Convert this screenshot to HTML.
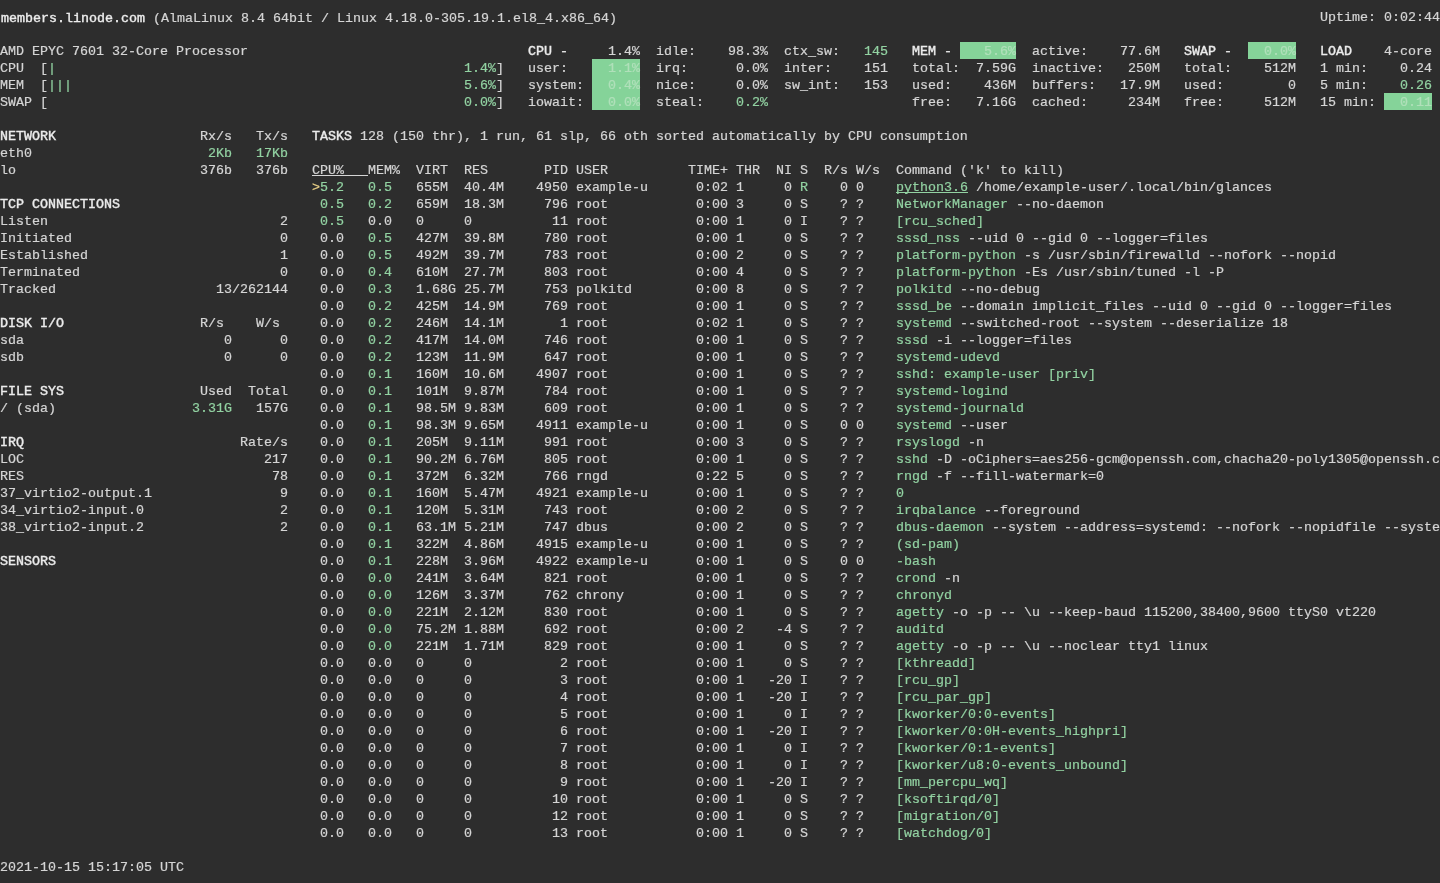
<!DOCTYPE html><html><head><meta charset="utf-8"><style>
html,body{margin:0;padding:0;}
body{width:1440px;height:883px;background:#2d2d2d;overflow:hidden;position:relative;font-family:"Liberation Mono",monospace;font-size:13.33px;}
.s{position:absolute;white-space:pre;height:17px;line-height:17px;color:#d5d5d5;}
.w{color:#d5d5d5;}
.b{color:#ececec;font-weight:normal;-webkit-text-stroke:0.4px;}
.t0{transform:translate(1px,1px);}
.g{color:#92d2a2;}
.gu{color:#92d2a2;text-decoration:underline;text-underline-offset:1px;text-decoration-skip-ink:none;}
.u{color:#d5d5d5;text-decoration:underline;text-underline-offset:1px;text-decoration-skip-ink:none;}
.y{color:#e8cf86;}
#L{position:absolute;left:0;top:0;width:1440px;height:883px;will-change:transform;-webkit-text-stroke:0.2px;}
.hl{position:absolute;background:#85d399;}
.ht{color:#b0e0ba;}

</style></head><body><div id="L">
<div class="hl" style="left:592px;top:59px;width:48px;height:51px"></div>
<div class="s ht" style="left:592px;top:60px">  1.1%</div>
<div class="s ht" style="left:592px;top:77px">  0.4%</div>
<div class="s ht" style="left:592px;top:94px">  0.0%</div>
<div class="hl" style="left:960px;top:42px;width:56px;height:17px"></div>
<div class="s ht" style="left:960px;top:43px">   5.6%</div>
<div class="hl" style="left:1248px;top:42px;width:48px;height:17px"></div>
<div class="s ht" style="left:1248px;top:43px">  0.0%</div>
<div class="hl" style="left:1384px;top:93px;width:48px;height:17px"></div>
<div class="s ht" style="left:1384px;top:94px">  0.11</div>
<div class="s b t0" style="left:0px;top:9px">members.linode.com</div>
<div class="s w t0" style="left:144px;top:9px"> (AlmaLinux 8.4 64bit / Linux 4.18.0-305.19.1.el8_4.x86_64)</div>
<div class="s w" style="left:1320px;top:9px">Uptime: 0:02:44</div>
<div class="s w" style="left:0px;top:43px">AMD EPYC 7601 32-Core Processor</div>
<div class="s b" style="left:528px;top:43px">CPU -</div>
<div class="s w" style="left:608px;top:43px">1.4%</div>
<div class="s w" style="left:656px;top:43px">idle:</div>
<div class="s w" style="left:728px;top:43px">98.3%</div>
<div class="s w" style="left:784px;top:43px">ctx_sw:</div>
<div class="s g" style="left:864px;top:43px">145</div>
<div class="s b" style="left:912px;top:43px">MEM -</div>
<div class="s w" style="left:1032px;top:43px">active:</div>
<div class="s w" style="left:1120px;top:43px">77.6M</div>
<div class="s b" style="left:1184px;top:43px">SWAP -</div>
<div class="s b" style="left:1320px;top:43px">LOAD</div>
<div class="s w" style="left:1384px;top:43px">4-core</div>
<div class="s w" style="left:0px;top:60px">CPU  [</div>
<div class="s g" style="left:48px;top:60px">|</div>
<div class="s g" style="left:464px;top:60px">1.4%</div>
<div class="s w" style="left:496px;top:60px">]</div>
<div class="s w" style="left:528px;top:60px">user:</div>
<div class="s w" style="left:656px;top:60px">irq:</div>
<div class="s w" style="left:736px;top:60px">0.0%</div>
<div class="s w" style="left:784px;top:60px">inter:</div>
<div class="s w" style="left:864px;top:60px">151</div>
<div class="s w" style="left:912px;top:60px">total:</div>
<div class="s w" style="left:976px;top:60px">7.59G</div>
<div class="s w" style="left:1032px;top:60px">inactive:</div>
<div class="s w" style="left:1128px;top:60px">250M</div>
<div class="s w" style="left:1184px;top:60px">total:</div>
<div class="s w" style="left:1264px;top:60px">512M</div>
<div class="s w" style="left:1320px;top:60px">1 min:</div>
<div class="s w" style="left:1400px;top:60px">0.24</div>
<div class="s w" style="left:0px;top:77px">MEM  [</div>
<div class="s g" style="left:48px;top:77px">|||</div>
<div class="s g" style="left:464px;top:77px">5.6%</div>
<div class="s w" style="left:496px;top:77px">]</div>
<div class="s w" style="left:528px;top:77px">system:</div>
<div class="s w" style="left:656px;top:77px">nice:</div>
<div class="s w" style="left:736px;top:77px">0.0%</div>
<div class="s w" style="left:784px;top:77px">sw_int:</div>
<div class="s w" style="left:864px;top:77px">153</div>
<div class="s w" style="left:912px;top:77px">used:</div>
<div class="s w" style="left:984px;top:77px">436M</div>
<div class="s w" style="left:1032px;top:77px">buffers:</div>
<div class="s w" style="left:1120px;top:77px">17.9M</div>
<div class="s w" style="left:1184px;top:77px">used:</div>
<div class="s w" style="left:1288px;top:77px">0</div>
<div class="s w" style="left:1320px;top:77px">5 min:</div>
<div class="s g" style="left:1400px;top:77px">0.26</div>
<div class="s w" style="left:0px;top:94px">SWAP [</div>
<div class="s g" style="left:464px;top:94px">0.0%</div>
<div class="s w" style="left:496px;top:94px">]</div>
<div class="s w" style="left:528px;top:94px">iowait:</div>
<div class="s w" style="left:656px;top:94px">steal:</div>
<div class="s g" style="left:736px;top:94px">0.2%</div>
<div class="s w" style="left:912px;top:94px">free:</div>
<div class="s w" style="left:976px;top:94px">7.16G</div>
<div class="s w" style="left:1032px;top:94px">cached:</div>
<div class="s w" style="left:1128px;top:94px">234M</div>
<div class="s w" style="left:1184px;top:94px">free:</div>
<div class="s w" style="left:1264px;top:94px">512M</div>
<div class="s w" style="left:1320px;top:94px">15 min:</div>
<div class="s b" style="left:0px;top:128px">NETWORK</div>
<div class="s w" style="left:200px;top:128px">Rx/s</div>
<div class="s w" style="left:256px;top:128px">Tx/s</div>
<div class="s w" style="left:0px;top:145px">eth0</div>
<div class="s g" style="left:208px;top:145px">2Kb</div>
<div class="s g" style="left:256px;top:145px">17Kb</div>
<div class="s w" style="left:0px;top:162px">lo</div>
<div class="s w" style="left:200px;top:162px">376b</div>
<div class="s w" style="left:256px;top:162px">376b</div>
<div class="s b" style="left:0px;top:196px">TCP CONNECTIONS</div>
<div class="s w" style="left:0px;top:213px">Listen</div>
<div class="s w" style="left:280px;top:213px">2</div>
<div class="s w" style="left:0px;top:230px">Initiated</div>
<div class="s w" style="left:280px;top:230px">0</div>
<div class="s w" style="left:0px;top:247px">Established</div>
<div class="s w" style="left:280px;top:247px">1</div>
<div class="s w" style="left:0px;top:264px">Terminated</div>
<div class="s w" style="left:280px;top:264px">0</div>
<div class="s w" style="left:0px;top:281px">Tracked</div>
<div class="s w" style="left:216px;top:281px">13/262144</div>
<div class="s b" style="left:0px;top:315px">DISK I/O</div>
<div class="s w" style="left:200px;top:315px">R/s</div>
<div class="s w" style="left:256px;top:315px">W/s</div>
<div class="s w" style="left:0px;top:332px">sda</div>
<div class="s w" style="left:224px;top:332px">0</div>
<div class="s w" style="left:280px;top:332px">0</div>
<div class="s w" style="left:0px;top:349px">sdb</div>
<div class="s w" style="left:224px;top:349px">0</div>
<div class="s w" style="left:280px;top:349px">0</div>
<div class="s b" style="left:0px;top:383px">FILE SYS</div>
<div class="s w" style="left:200px;top:383px">Used</div>
<div class="s w" style="left:248px;top:383px">Total</div>
<div class="s w" style="left:0px;top:400px">/ (sda)</div>
<div class="s g" style="left:192px;top:400px">3.31G</div>
<div class="s w" style="left:256px;top:400px">157G</div>
<div class="s b" style="left:0px;top:434px">IRQ</div>
<div class="s w" style="left:240px;top:434px">Rate/s</div>
<div class="s w" style="left:0px;top:451px">LOC</div>
<div class="s w" style="left:264px;top:451px">217</div>
<div class="s w" style="left:0px;top:468px">RES</div>
<div class="s w" style="left:272px;top:468px">78</div>
<div class="s w" style="left:0px;top:485px">37_virtio2-output.1</div>
<div class="s w" style="left:280px;top:485px">9</div>
<div class="s w" style="left:0px;top:502px">34_virtio2-input.0</div>
<div class="s w" style="left:280px;top:502px">2</div>
<div class="s w" style="left:0px;top:519px">38_virtio2-input.2</div>
<div class="s w" style="left:280px;top:519px">2</div>
<div class="s b" style="left:0px;top:553px">SENSORS</div>
<div class="s b" style="left:312px;top:128px">TASKS</div>
<div class="s w" style="left:352px;top:128px"> 128 (150 thr), 1 run, 61 slp, 66 oth sorted automatically by CPU consumption</div>
<div class="s u" style="left:312px;top:162px">CPU%   </div>
<div class="s w" style="left:368px;top:162px">MEM%</div>
<div class="s w" style="left:416px;top:162px">VIRT</div>
<div class="s w" style="left:464px;top:162px">RES</div>
<div class="s w" style="left:544px;top:162px">PID</div>
<div class="s w" style="left:576px;top:162px">USER</div>
<div class="s w" style="left:688px;top:162px">TIME+</div>
<div class="s w" style="left:736px;top:162px">THR</div>
<div class="s w" style="left:776px;top:162px">NI</div>
<div class="s w" style="left:800px;top:162px">S</div>
<div class="s w" style="left:824px;top:162px">R/s</div>
<div class="s w" style="left:856px;top:162px">W/s</div>
<div class="s w" style="left:896px;top:162px">Command (&#x27;k&#x27; to kill)</div>
<div class="s y" style="left:312px;top:179px">&gt;</div>
<div class="s g" style="left:320px;top:179px">5.2</div>
<div class="s g" style="left:368px;top:179px">0.5</div>
<div class="s w" style="left:416px;top:179px">655M</div>
<div class="s w" style="left:464px;top:179px">40.4M</div>
<div class="s w" style="left:536px;top:179px">4950</div>
<div class="s w" style="left:576px;top:179px">example-u</div>
<div class="s w" style="left:696px;top:179px">0:02</div>
<div class="s w" style="left:736px;top:179px">1</div>
<div class="s w" style="left:784px;top:179px">0</div>
<div class="s g" style="left:800px;top:179px">R</div>
<div class="s w" style="left:840px;top:179px">0</div>
<div class="s w" style="left:856px;top:179px">0</div>
<div class="s gu" style="left:896px;top:179px">python3.6</div>
<div class="s w" style="left:968px;top:179px"> /home/example-user/.local/bin/glances</div>
<div class="s g" style="left:320px;top:196px">0.5</div>
<div class="s g" style="left:368px;top:196px">0.2</div>
<div class="s w" style="left:416px;top:196px">659M</div>
<div class="s w" style="left:464px;top:196px">18.3M</div>
<div class="s w" style="left:544px;top:196px">796</div>
<div class="s w" style="left:576px;top:196px">root</div>
<div class="s w" style="left:696px;top:196px">0:00</div>
<div class="s w" style="left:736px;top:196px">3</div>
<div class="s w" style="left:784px;top:196px">0</div>
<div class="s w" style="left:800px;top:196px">S</div>
<div class="s w" style="left:840px;top:196px">?</div>
<div class="s w" style="left:856px;top:196px">?</div>
<div class="s g" style="left:896px;top:196px">NetworkManager</div>
<div class="s w" style="left:1008px;top:196px"> --no-daemon</div>
<div class="s g" style="left:320px;top:213px">0.5</div>
<div class="s w" style="left:368px;top:213px">0.0</div>
<div class="s w" style="left:416px;top:213px">0</div>
<div class="s w" style="left:464px;top:213px">0</div>
<div class="s w" style="left:552px;top:213px">11</div>
<div class="s w" style="left:576px;top:213px">root</div>
<div class="s w" style="left:696px;top:213px">0:00</div>
<div class="s w" style="left:736px;top:213px">1</div>
<div class="s w" style="left:784px;top:213px">0</div>
<div class="s w" style="left:800px;top:213px">I</div>
<div class="s w" style="left:840px;top:213px">?</div>
<div class="s w" style="left:856px;top:213px">?</div>
<div class="s g" style="left:896px;top:213px">[rcu_sched]</div>
<div class="s w" style="left:320px;top:230px">0.0</div>
<div class="s g" style="left:368px;top:230px">0.5</div>
<div class="s w" style="left:416px;top:230px">427M</div>
<div class="s w" style="left:464px;top:230px">39.8M</div>
<div class="s w" style="left:544px;top:230px">780</div>
<div class="s w" style="left:576px;top:230px">root</div>
<div class="s w" style="left:696px;top:230px">0:00</div>
<div class="s w" style="left:736px;top:230px">1</div>
<div class="s w" style="left:784px;top:230px">0</div>
<div class="s w" style="left:800px;top:230px">S</div>
<div class="s w" style="left:840px;top:230px">?</div>
<div class="s w" style="left:856px;top:230px">?</div>
<div class="s g" style="left:896px;top:230px">sssd_nss</div>
<div class="s w" style="left:960px;top:230px"> --uid 0 --gid 0 --logger=files</div>
<div class="s w" style="left:320px;top:247px">0.0</div>
<div class="s g" style="left:368px;top:247px">0.5</div>
<div class="s w" style="left:416px;top:247px">492M</div>
<div class="s w" style="left:464px;top:247px">39.7M</div>
<div class="s w" style="left:544px;top:247px">783</div>
<div class="s w" style="left:576px;top:247px">root</div>
<div class="s w" style="left:696px;top:247px">0:00</div>
<div class="s w" style="left:736px;top:247px">2</div>
<div class="s w" style="left:784px;top:247px">0</div>
<div class="s w" style="left:800px;top:247px">S</div>
<div class="s w" style="left:840px;top:247px">?</div>
<div class="s w" style="left:856px;top:247px">?</div>
<div class="s g" style="left:896px;top:247px">platform-python</div>
<div class="s w" style="left:1016px;top:247px"> -s /usr/sbin/firewalld --nofork --nopid</div>
<div class="s w" style="left:320px;top:264px">0.0</div>
<div class="s g" style="left:368px;top:264px">0.4</div>
<div class="s w" style="left:416px;top:264px">610M</div>
<div class="s w" style="left:464px;top:264px">27.7M</div>
<div class="s w" style="left:544px;top:264px">803</div>
<div class="s w" style="left:576px;top:264px">root</div>
<div class="s w" style="left:696px;top:264px">0:00</div>
<div class="s w" style="left:736px;top:264px">4</div>
<div class="s w" style="left:784px;top:264px">0</div>
<div class="s w" style="left:800px;top:264px">S</div>
<div class="s w" style="left:840px;top:264px">?</div>
<div class="s w" style="left:856px;top:264px">?</div>
<div class="s g" style="left:896px;top:264px">platform-python</div>
<div class="s w" style="left:1016px;top:264px"> -Es /usr/sbin/tuned -l -P</div>
<div class="s w" style="left:320px;top:281px">0.0</div>
<div class="s g" style="left:368px;top:281px">0.3</div>
<div class="s w" style="left:416px;top:281px">1.68G</div>
<div class="s w" style="left:464px;top:281px">25.7M</div>
<div class="s w" style="left:544px;top:281px">753</div>
<div class="s w" style="left:576px;top:281px">polkitd</div>
<div class="s w" style="left:696px;top:281px">0:00</div>
<div class="s w" style="left:736px;top:281px">8</div>
<div class="s w" style="left:784px;top:281px">0</div>
<div class="s w" style="left:800px;top:281px">S</div>
<div class="s w" style="left:840px;top:281px">?</div>
<div class="s w" style="left:856px;top:281px">?</div>
<div class="s g" style="left:896px;top:281px">polkitd</div>
<div class="s w" style="left:952px;top:281px"> --no-debug</div>
<div class="s w" style="left:320px;top:298px">0.0</div>
<div class="s g" style="left:368px;top:298px">0.2</div>
<div class="s w" style="left:416px;top:298px">425M</div>
<div class="s w" style="left:464px;top:298px">14.9M</div>
<div class="s w" style="left:544px;top:298px">769</div>
<div class="s w" style="left:576px;top:298px">root</div>
<div class="s w" style="left:696px;top:298px">0:00</div>
<div class="s w" style="left:736px;top:298px">1</div>
<div class="s w" style="left:784px;top:298px">0</div>
<div class="s w" style="left:800px;top:298px">S</div>
<div class="s w" style="left:840px;top:298px">?</div>
<div class="s w" style="left:856px;top:298px">?</div>
<div class="s g" style="left:896px;top:298px">sssd_be</div>
<div class="s w" style="left:952px;top:298px"> --domain implicit_files --uid 0 --gid 0 --logger=files</div>
<div class="s w" style="left:320px;top:315px">0.0</div>
<div class="s g" style="left:368px;top:315px">0.2</div>
<div class="s w" style="left:416px;top:315px">246M</div>
<div class="s w" style="left:464px;top:315px">14.1M</div>
<div class="s w" style="left:560px;top:315px">1</div>
<div class="s w" style="left:576px;top:315px">root</div>
<div class="s w" style="left:696px;top:315px">0:02</div>
<div class="s w" style="left:736px;top:315px">1</div>
<div class="s w" style="left:784px;top:315px">0</div>
<div class="s w" style="left:800px;top:315px">S</div>
<div class="s w" style="left:840px;top:315px">?</div>
<div class="s w" style="left:856px;top:315px">?</div>
<div class="s g" style="left:896px;top:315px">systemd</div>
<div class="s w" style="left:952px;top:315px"> --switched-root --system --deserialize 18</div>
<div class="s w" style="left:320px;top:332px">0.0</div>
<div class="s g" style="left:368px;top:332px">0.2</div>
<div class="s w" style="left:416px;top:332px">417M</div>
<div class="s w" style="left:464px;top:332px">14.0M</div>
<div class="s w" style="left:544px;top:332px">746</div>
<div class="s w" style="left:576px;top:332px">root</div>
<div class="s w" style="left:696px;top:332px">0:00</div>
<div class="s w" style="left:736px;top:332px">1</div>
<div class="s w" style="left:784px;top:332px">0</div>
<div class="s w" style="left:800px;top:332px">S</div>
<div class="s w" style="left:840px;top:332px">?</div>
<div class="s w" style="left:856px;top:332px">?</div>
<div class="s g" style="left:896px;top:332px">sssd</div>
<div class="s w" style="left:928px;top:332px"> -i --logger=files</div>
<div class="s w" style="left:320px;top:349px">0.0</div>
<div class="s g" style="left:368px;top:349px">0.2</div>
<div class="s w" style="left:416px;top:349px">123M</div>
<div class="s w" style="left:464px;top:349px">11.9M</div>
<div class="s w" style="left:544px;top:349px">647</div>
<div class="s w" style="left:576px;top:349px">root</div>
<div class="s w" style="left:696px;top:349px">0:00</div>
<div class="s w" style="left:736px;top:349px">1</div>
<div class="s w" style="left:784px;top:349px">0</div>
<div class="s w" style="left:800px;top:349px">S</div>
<div class="s w" style="left:840px;top:349px">?</div>
<div class="s w" style="left:856px;top:349px">?</div>
<div class="s g" style="left:896px;top:349px">systemd-udevd</div>
<div class="s w" style="left:320px;top:366px">0.0</div>
<div class="s g" style="left:368px;top:366px">0.1</div>
<div class="s w" style="left:416px;top:366px">160M</div>
<div class="s w" style="left:464px;top:366px">10.6M</div>
<div class="s w" style="left:536px;top:366px">4907</div>
<div class="s w" style="left:576px;top:366px">root</div>
<div class="s w" style="left:696px;top:366px">0:00</div>
<div class="s w" style="left:736px;top:366px">1</div>
<div class="s w" style="left:784px;top:366px">0</div>
<div class="s w" style="left:800px;top:366px">S</div>
<div class="s w" style="left:840px;top:366px">?</div>
<div class="s w" style="left:856px;top:366px">?</div>
<div class="s g" style="left:896px;top:366px">sshd: example-user [priv]</div>
<div class="s w" style="left:320px;top:383px">0.0</div>
<div class="s g" style="left:368px;top:383px">0.1</div>
<div class="s w" style="left:416px;top:383px">101M</div>
<div class="s w" style="left:464px;top:383px">9.87M</div>
<div class="s w" style="left:544px;top:383px">784</div>
<div class="s w" style="left:576px;top:383px">root</div>
<div class="s w" style="left:696px;top:383px">0:00</div>
<div class="s w" style="left:736px;top:383px">1</div>
<div class="s w" style="left:784px;top:383px">0</div>
<div class="s w" style="left:800px;top:383px">S</div>
<div class="s w" style="left:840px;top:383px">?</div>
<div class="s w" style="left:856px;top:383px">?</div>
<div class="s g" style="left:896px;top:383px">systemd-logind</div>
<div class="s w" style="left:320px;top:400px">0.0</div>
<div class="s g" style="left:368px;top:400px">0.1</div>
<div class="s w" style="left:416px;top:400px">98.5M</div>
<div class="s w" style="left:464px;top:400px">9.83M</div>
<div class="s w" style="left:544px;top:400px">609</div>
<div class="s w" style="left:576px;top:400px">root</div>
<div class="s w" style="left:696px;top:400px">0:00</div>
<div class="s w" style="left:736px;top:400px">1</div>
<div class="s w" style="left:784px;top:400px">0</div>
<div class="s w" style="left:800px;top:400px">S</div>
<div class="s w" style="left:840px;top:400px">?</div>
<div class="s w" style="left:856px;top:400px">?</div>
<div class="s g" style="left:896px;top:400px">systemd-journald</div>
<div class="s w" style="left:320px;top:417px">0.0</div>
<div class="s g" style="left:368px;top:417px">0.1</div>
<div class="s w" style="left:416px;top:417px">98.3M</div>
<div class="s w" style="left:464px;top:417px">9.65M</div>
<div class="s w" style="left:536px;top:417px">4911</div>
<div class="s w" style="left:576px;top:417px">example-u</div>
<div class="s w" style="left:696px;top:417px">0:00</div>
<div class="s w" style="left:736px;top:417px">1</div>
<div class="s w" style="left:784px;top:417px">0</div>
<div class="s w" style="left:800px;top:417px">S</div>
<div class="s w" style="left:840px;top:417px">0</div>
<div class="s w" style="left:856px;top:417px">0</div>
<div class="s g" style="left:896px;top:417px">systemd</div>
<div class="s w" style="left:952px;top:417px"> --user</div>
<div class="s w" style="left:320px;top:434px">0.0</div>
<div class="s g" style="left:368px;top:434px">0.1</div>
<div class="s w" style="left:416px;top:434px">205M</div>
<div class="s w" style="left:464px;top:434px">9.11M</div>
<div class="s w" style="left:544px;top:434px">991</div>
<div class="s w" style="left:576px;top:434px">root</div>
<div class="s w" style="left:696px;top:434px">0:00</div>
<div class="s w" style="left:736px;top:434px">3</div>
<div class="s w" style="left:784px;top:434px">0</div>
<div class="s w" style="left:800px;top:434px">S</div>
<div class="s w" style="left:840px;top:434px">?</div>
<div class="s w" style="left:856px;top:434px">?</div>
<div class="s g" style="left:896px;top:434px">rsyslogd</div>
<div class="s w" style="left:960px;top:434px"> -n</div>
<div class="s w" style="left:320px;top:451px">0.0</div>
<div class="s g" style="left:368px;top:451px">0.1</div>
<div class="s w" style="left:416px;top:451px">90.2M</div>
<div class="s w" style="left:464px;top:451px">6.76M</div>
<div class="s w" style="left:544px;top:451px">805</div>
<div class="s w" style="left:576px;top:451px">root</div>
<div class="s w" style="left:696px;top:451px">0:00</div>
<div class="s w" style="left:736px;top:451px">1</div>
<div class="s w" style="left:784px;top:451px">0</div>
<div class="s w" style="left:800px;top:451px">S</div>
<div class="s w" style="left:840px;top:451px">?</div>
<div class="s w" style="left:856px;top:451px">?</div>
<div class="s g" style="left:896px;top:451px">sshd</div>
<div class="s w" style="left:928px;top:451px"> -D -oCiphers=aes256-gcm@openssh.com,chacha20-poly1305@openssh.c</div>
<div class="s w" style="left:320px;top:468px">0.0</div>
<div class="s g" style="left:368px;top:468px">0.1</div>
<div class="s w" style="left:416px;top:468px">372M</div>
<div class="s w" style="left:464px;top:468px">6.32M</div>
<div class="s w" style="left:544px;top:468px">766</div>
<div class="s w" style="left:576px;top:468px">rngd</div>
<div class="s w" style="left:696px;top:468px">0:22</div>
<div class="s w" style="left:736px;top:468px">5</div>
<div class="s w" style="left:784px;top:468px">0</div>
<div class="s w" style="left:800px;top:468px">S</div>
<div class="s w" style="left:840px;top:468px">?</div>
<div class="s w" style="left:856px;top:468px">?</div>
<div class="s g" style="left:896px;top:468px">rngd</div>
<div class="s w" style="left:928px;top:468px"> -f --fill-watermark=0</div>
<div class="s w" style="left:320px;top:485px">0.0</div>
<div class="s g" style="left:368px;top:485px">0.1</div>
<div class="s w" style="left:416px;top:485px">160M</div>
<div class="s w" style="left:464px;top:485px">5.47M</div>
<div class="s w" style="left:536px;top:485px">4921</div>
<div class="s w" style="left:576px;top:485px">example-u</div>
<div class="s w" style="left:696px;top:485px">0:00</div>
<div class="s w" style="left:736px;top:485px">1</div>
<div class="s w" style="left:784px;top:485px">0</div>
<div class="s w" style="left:800px;top:485px">S</div>
<div class="s w" style="left:840px;top:485px">?</div>
<div class="s w" style="left:856px;top:485px">?</div>
<div class="s g" style="left:896px;top:485px">0</div>
<div class="s w" style="left:320px;top:502px">0.0</div>
<div class="s g" style="left:368px;top:502px">0.1</div>
<div class="s w" style="left:416px;top:502px">120M</div>
<div class="s w" style="left:464px;top:502px">5.31M</div>
<div class="s w" style="left:544px;top:502px">743</div>
<div class="s w" style="left:576px;top:502px">root</div>
<div class="s w" style="left:696px;top:502px">0:00</div>
<div class="s w" style="left:736px;top:502px">2</div>
<div class="s w" style="left:784px;top:502px">0</div>
<div class="s w" style="left:800px;top:502px">S</div>
<div class="s w" style="left:840px;top:502px">?</div>
<div class="s w" style="left:856px;top:502px">?</div>
<div class="s g" style="left:896px;top:502px">irqbalance</div>
<div class="s w" style="left:976px;top:502px"> --foreground</div>
<div class="s w" style="left:320px;top:519px">0.0</div>
<div class="s g" style="left:368px;top:519px">0.1</div>
<div class="s w" style="left:416px;top:519px">63.1M</div>
<div class="s w" style="left:464px;top:519px">5.21M</div>
<div class="s w" style="left:544px;top:519px">747</div>
<div class="s w" style="left:576px;top:519px">dbus</div>
<div class="s w" style="left:696px;top:519px">0:00</div>
<div class="s w" style="left:736px;top:519px">2</div>
<div class="s w" style="left:784px;top:519px">0</div>
<div class="s w" style="left:800px;top:519px">S</div>
<div class="s w" style="left:840px;top:519px">?</div>
<div class="s w" style="left:856px;top:519px">?</div>
<div class="s g" style="left:896px;top:519px">dbus-daemon</div>
<div class="s w" style="left:984px;top:519px"> --system --address=systemd: --nofork --nopidfile --syste</div>
<div class="s w" style="left:320px;top:536px">0.0</div>
<div class="s g" style="left:368px;top:536px">0.1</div>
<div class="s w" style="left:416px;top:536px">322M</div>
<div class="s w" style="left:464px;top:536px">4.86M</div>
<div class="s w" style="left:536px;top:536px">4915</div>
<div class="s w" style="left:576px;top:536px">example-u</div>
<div class="s w" style="left:696px;top:536px">0:00</div>
<div class="s w" style="left:736px;top:536px">1</div>
<div class="s w" style="left:784px;top:536px">0</div>
<div class="s w" style="left:800px;top:536px">S</div>
<div class="s w" style="left:840px;top:536px">?</div>
<div class="s w" style="left:856px;top:536px">?</div>
<div class="s g" style="left:896px;top:536px">(sd-pam)</div>
<div class="s w" style="left:320px;top:553px">0.0</div>
<div class="s g" style="left:368px;top:553px">0.1</div>
<div class="s w" style="left:416px;top:553px">228M</div>
<div class="s w" style="left:464px;top:553px">3.96M</div>
<div class="s w" style="left:536px;top:553px">4922</div>
<div class="s w" style="left:576px;top:553px">example-u</div>
<div class="s w" style="left:696px;top:553px">0:00</div>
<div class="s w" style="left:736px;top:553px">1</div>
<div class="s w" style="left:784px;top:553px">0</div>
<div class="s w" style="left:800px;top:553px">S</div>
<div class="s w" style="left:840px;top:553px">0</div>
<div class="s w" style="left:856px;top:553px">0</div>
<div class="s g" style="left:896px;top:553px">-bash</div>
<div class="s w" style="left:320px;top:570px">0.0</div>
<div class="s g" style="left:368px;top:570px">0.0</div>
<div class="s w" style="left:416px;top:570px">241M</div>
<div class="s w" style="left:464px;top:570px">3.64M</div>
<div class="s w" style="left:544px;top:570px">821</div>
<div class="s w" style="left:576px;top:570px">root</div>
<div class="s w" style="left:696px;top:570px">0:00</div>
<div class="s w" style="left:736px;top:570px">1</div>
<div class="s w" style="left:784px;top:570px">0</div>
<div class="s w" style="left:800px;top:570px">S</div>
<div class="s w" style="left:840px;top:570px">?</div>
<div class="s w" style="left:856px;top:570px">?</div>
<div class="s g" style="left:896px;top:570px">crond</div>
<div class="s w" style="left:936px;top:570px"> -n</div>
<div class="s w" style="left:320px;top:587px">0.0</div>
<div class="s g" style="left:368px;top:587px">0.0</div>
<div class="s w" style="left:416px;top:587px">126M</div>
<div class="s w" style="left:464px;top:587px">3.37M</div>
<div class="s w" style="left:544px;top:587px">762</div>
<div class="s w" style="left:576px;top:587px">chrony</div>
<div class="s w" style="left:696px;top:587px">0:00</div>
<div class="s w" style="left:736px;top:587px">1</div>
<div class="s w" style="left:784px;top:587px">0</div>
<div class="s w" style="left:800px;top:587px">S</div>
<div class="s w" style="left:840px;top:587px">?</div>
<div class="s w" style="left:856px;top:587px">?</div>
<div class="s g" style="left:896px;top:587px">chronyd</div>
<div class="s w" style="left:320px;top:604px">0.0</div>
<div class="s g" style="left:368px;top:604px">0.0</div>
<div class="s w" style="left:416px;top:604px">221M</div>
<div class="s w" style="left:464px;top:604px">2.12M</div>
<div class="s w" style="left:544px;top:604px">830</div>
<div class="s w" style="left:576px;top:604px">root</div>
<div class="s w" style="left:696px;top:604px">0:00</div>
<div class="s w" style="left:736px;top:604px">1</div>
<div class="s w" style="left:784px;top:604px">0</div>
<div class="s w" style="left:800px;top:604px">S</div>
<div class="s w" style="left:840px;top:604px">?</div>
<div class="s w" style="left:856px;top:604px">?</div>
<div class="s g" style="left:896px;top:604px">agetty</div>
<div class="s w" style="left:944px;top:604px"> -o -p -- \u --keep-baud 115200,38400,9600 ttyS0 vt220</div>
<div class="s w" style="left:320px;top:621px">0.0</div>
<div class="s g" style="left:368px;top:621px">0.0</div>
<div class="s w" style="left:416px;top:621px">75.2M</div>
<div class="s w" style="left:464px;top:621px">1.88M</div>
<div class="s w" style="left:544px;top:621px">692</div>
<div class="s w" style="left:576px;top:621px">root</div>
<div class="s w" style="left:696px;top:621px">0:00</div>
<div class="s w" style="left:736px;top:621px">2</div>
<div class="s w" style="left:776px;top:621px">-4</div>
<div class="s w" style="left:800px;top:621px">S</div>
<div class="s w" style="left:840px;top:621px">?</div>
<div class="s w" style="left:856px;top:621px">?</div>
<div class="s g" style="left:896px;top:621px">auditd</div>
<div class="s w" style="left:320px;top:638px">0.0</div>
<div class="s g" style="left:368px;top:638px">0.0</div>
<div class="s w" style="left:416px;top:638px">221M</div>
<div class="s w" style="left:464px;top:638px">1.71M</div>
<div class="s w" style="left:544px;top:638px">829</div>
<div class="s w" style="left:576px;top:638px">root</div>
<div class="s w" style="left:696px;top:638px">0:00</div>
<div class="s w" style="left:736px;top:638px">1</div>
<div class="s w" style="left:784px;top:638px">0</div>
<div class="s w" style="left:800px;top:638px">S</div>
<div class="s w" style="left:840px;top:638px">?</div>
<div class="s w" style="left:856px;top:638px">?</div>
<div class="s g" style="left:896px;top:638px">agetty</div>
<div class="s w" style="left:944px;top:638px"> -o -p -- \u --noclear tty1 linux</div>
<div class="s w" style="left:320px;top:655px">0.0</div>
<div class="s w" style="left:368px;top:655px">0.0</div>
<div class="s w" style="left:416px;top:655px">0</div>
<div class="s w" style="left:464px;top:655px">0</div>
<div class="s w" style="left:560px;top:655px">2</div>
<div class="s w" style="left:576px;top:655px">root</div>
<div class="s w" style="left:696px;top:655px">0:00</div>
<div class="s w" style="left:736px;top:655px">1</div>
<div class="s w" style="left:784px;top:655px">0</div>
<div class="s w" style="left:800px;top:655px">S</div>
<div class="s w" style="left:840px;top:655px">?</div>
<div class="s w" style="left:856px;top:655px">?</div>
<div class="s g" style="left:896px;top:655px">[kthreadd]</div>
<div class="s w" style="left:320px;top:672px">0.0</div>
<div class="s w" style="left:368px;top:672px">0.0</div>
<div class="s w" style="left:416px;top:672px">0</div>
<div class="s w" style="left:464px;top:672px">0</div>
<div class="s w" style="left:560px;top:672px">3</div>
<div class="s w" style="left:576px;top:672px">root</div>
<div class="s w" style="left:696px;top:672px">0:00</div>
<div class="s w" style="left:736px;top:672px">1</div>
<div class="s w" style="left:768px;top:672px">-20</div>
<div class="s w" style="left:800px;top:672px">I</div>
<div class="s w" style="left:840px;top:672px">?</div>
<div class="s w" style="left:856px;top:672px">?</div>
<div class="s g" style="left:896px;top:672px">[rcu_gp]</div>
<div class="s w" style="left:320px;top:689px">0.0</div>
<div class="s w" style="left:368px;top:689px">0.0</div>
<div class="s w" style="left:416px;top:689px">0</div>
<div class="s w" style="left:464px;top:689px">0</div>
<div class="s w" style="left:560px;top:689px">4</div>
<div class="s w" style="left:576px;top:689px">root</div>
<div class="s w" style="left:696px;top:689px">0:00</div>
<div class="s w" style="left:736px;top:689px">1</div>
<div class="s w" style="left:768px;top:689px">-20</div>
<div class="s w" style="left:800px;top:689px">I</div>
<div class="s w" style="left:840px;top:689px">?</div>
<div class="s w" style="left:856px;top:689px">?</div>
<div class="s g" style="left:896px;top:689px">[rcu_par_gp]</div>
<div class="s w" style="left:320px;top:706px">0.0</div>
<div class="s w" style="left:368px;top:706px">0.0</div>
<div class="s w" style="left:416px;top:706px">0</div>
<div class="s w" style="left:464px;top:706px">0</div>
<div class="s w" style="left:560px;top:706px">5</div>
<div class="s w" style="left:576px;top:706px">root</div>
<div class="s w" style="left:696px;top:706px">0:00</div>
<div class="s w" style="left:736px;top:706px">1</div>
<div class="s w" style="left:784px;top:706px">0</div>
<div class="s w" style="left:800px;top:706px">I</div>
<div class="s w" style="left:840px;top:706px">?</div>
<div class="s w" style="left:856px;top:706px">?</div>
<div class="s g" style="left:896px;top:706px">[kworker/0:0-events]</div>
<div class="s w" style="left:320px;top:723px">0.0</div>
<div class="s w" style="left:368px;top:723px">0.0</div>
<div class="s w" style="left:416px;top:723px">0</div>
<div class="s w" style="left:464px;top:723px">0</div>
<div class="s w" style="left:560px;top:723px">6</div>
<div class="s w" style="left:576px;top:723px">root</div>
<div class="s w" style="left:696px;top:723px">0:00</div>
<div class="s w" style="left:736px;top:723px">1</div>
<div class="s w" style="left:768px;top:723px">-20</div>
<div class="s w" style="left:800px;top:723px">I</div>
<div class="s w" style="left:840px;top:723px">?</div>
<div class="s w" style="left:856px;top:723px">?</div>
<div class="s g" style="left:896px;top:723px">[kworker/0:0H-events_highpri]</div>
<div class="s w" style="left:320px;top:740px">0.0</div>
<div class="s w" style="left:368px;top:740px">0.0</div>
<div class="s w" style="left:416px;top:740px">0</div>
<div class="s w" style="left:464px;top:740px">0</div>
<div class="s w" style="left:560px;top:740px">7</div>
<div class="s w" style="left:576px;top:740px">root</div>
<div class="s w" style="left:696px;top:740px">0:00</div>
<div class="s w" style="left:736px;top:740px">1</div>
<div class="s w" style="left:784px;top:740px">0</div>
<div class="s w" style="left:800px;top:740px">I</div>
<div class="s w" style="left:840px;top:740px">?</div>
<div class="s w" style="left:856px;top:740px">?</div>
<div class="s g" style="left:896px;top:740px">[kworker/0:1-events]</div>
<div class="s w" style="left:320px;top:757px">0.0</div>
<div class="s w" style="left:368px;top:757px">0.0</div>
<div class="s w" style="left:416px;top:757px">0</div>
<div class="s w" style="left:464px;top:757px">0</div>
<div class="s w" style="left:560px;top:757px">8</div>
<div class="s w" style="left:576px;top:757px">root</div>
<div class="s w" style="left:696px;top:757px">0:00</div>
<div class="s w" style="left:736px;top:757px">1</div>
<div class="s w" style="left:784px;top:757px">0</div>
<div class="s w" style="left:800px;top:757px">I</div>
<div class="s w" style="left:840px;top:757px">?</div>
<div class="s w" style="left:856px;top:757px">?</div>
<div class="s g" style="left:896px;top:757px">[kworker/u8:0-events_unbound]</div>
<div class="s w" style="left:320px;top:774px">0.0</div>
<div class="s w" style="left:368px;top:774px">0.0</div>
<div class="s w" style="left:416px;top:774px">0</div>
<div class="s w" style="left:464px;top:774px">0</div>
<div class="s w" style="left:560px;top:774px">9</div>
<div class="s w" style="left:576px;top:774px">root</div>
<div class="s w" style="left:696px;top:774px">0:00</div>
<div class="s w" style="left:736px;top:774px">1</div>
<div class="s w" style="left:768px;top:774px">-20</div>
<div class="s w" style="left:800px;top:774px">I</div>
<div class="s w" style="left:840px;top:774px">?</div>
<div class="s w" style="left:856px;top:774px">?</div>
<div class="s g" style="left:896px;top:774px">[mm_percpu_wq]</div>
<div class="s w" style="left:320px;top:791px">0.0</div>
<div class="s w" style="left:368px;top:791px">0.0</div>
<div class="s w" style="left:416px;top:791px">0</div>
<div class="s w" style="left:464px;top:791px">0</div>
<div class="s w" style="left:552px;top:791px">10</div>
<div class="s w" style="left:576px;top:791px">root</div>
<div class="s w" style="left:696px;top:791px">0:00</div>
<div class="s w" style="left:736px;top:791px">1</div>
<div class="s w" style="left:784px;top:791px">0</div>
<div class="s w" style="left:800px;top:791px">S</div>
<div class="s w" style="left:840px;top:791px">?</div>
<div class="s w" style="left:856px;top:791px">?</div>
<div class="s g" style="left:896px;top:791px">[ksoftirqd/0]</div>
<div class="s w" style="left:320px;top:808px">0.0</div>
<div class="s w" style="left:368px;top:808px">0.0</div>
<div class="s w" style="left:416px;top:808px">0</div>
<div class="s w" style="left:464px;top:808px">0</div>
<div class="s w" style="left:552px;top:808px">12</div>
<div class="s w" style="left:576px;top:808px">root</div>
<div class="s w" style="left:696px;top:808px">0:00</div>
<div class="s w" style="left:736px;top:808px">1</div>
<div class="s w" style="left:784px;top:808px">0</div>
<div class="s w" style="left:800px;top:808px">S</div>
<div class="s w" style="left:840px;top:808px">?</div>
<div class="s w" style="left:856px;top:808px">?</div>
<div class="s g" style="left:896px;top:808px">[migration/0]</div>
<div class="s w" style="left:320px;top:825px">0.0</div>
<div class="s w" style="left:368px;top:825px">0.0</div>
<div class="s w" style="left:416px;top:825px">0</div>
<div class="s w" style="left:464px;top:825px">0</div>
<div class="s w" style="left:552px;top:825px">13</div>
<div class="s w" style="left:576px;top:825px">root</div>
<div class="s w" style="left:696px;top:825px">0:00</div>
<div class="s w" style="left:736px;top:825px">1</div>
<div class="s w" style="left:784px;top:825px">0</div>
<div class="s w" style="left:800px;top:825px">S</div>
<div class="s w" style="left:840px;top:825px">?</div>
<div class="s w" style="left:856px;top:825px">?</div>
<div class="s g" style="left:896px;top:825px">[watchdog/0]</div>
<div class="s w" style="left:0px;top:859px">2021-10-15 15:17:05 UTC</div>
</div></body></html>
